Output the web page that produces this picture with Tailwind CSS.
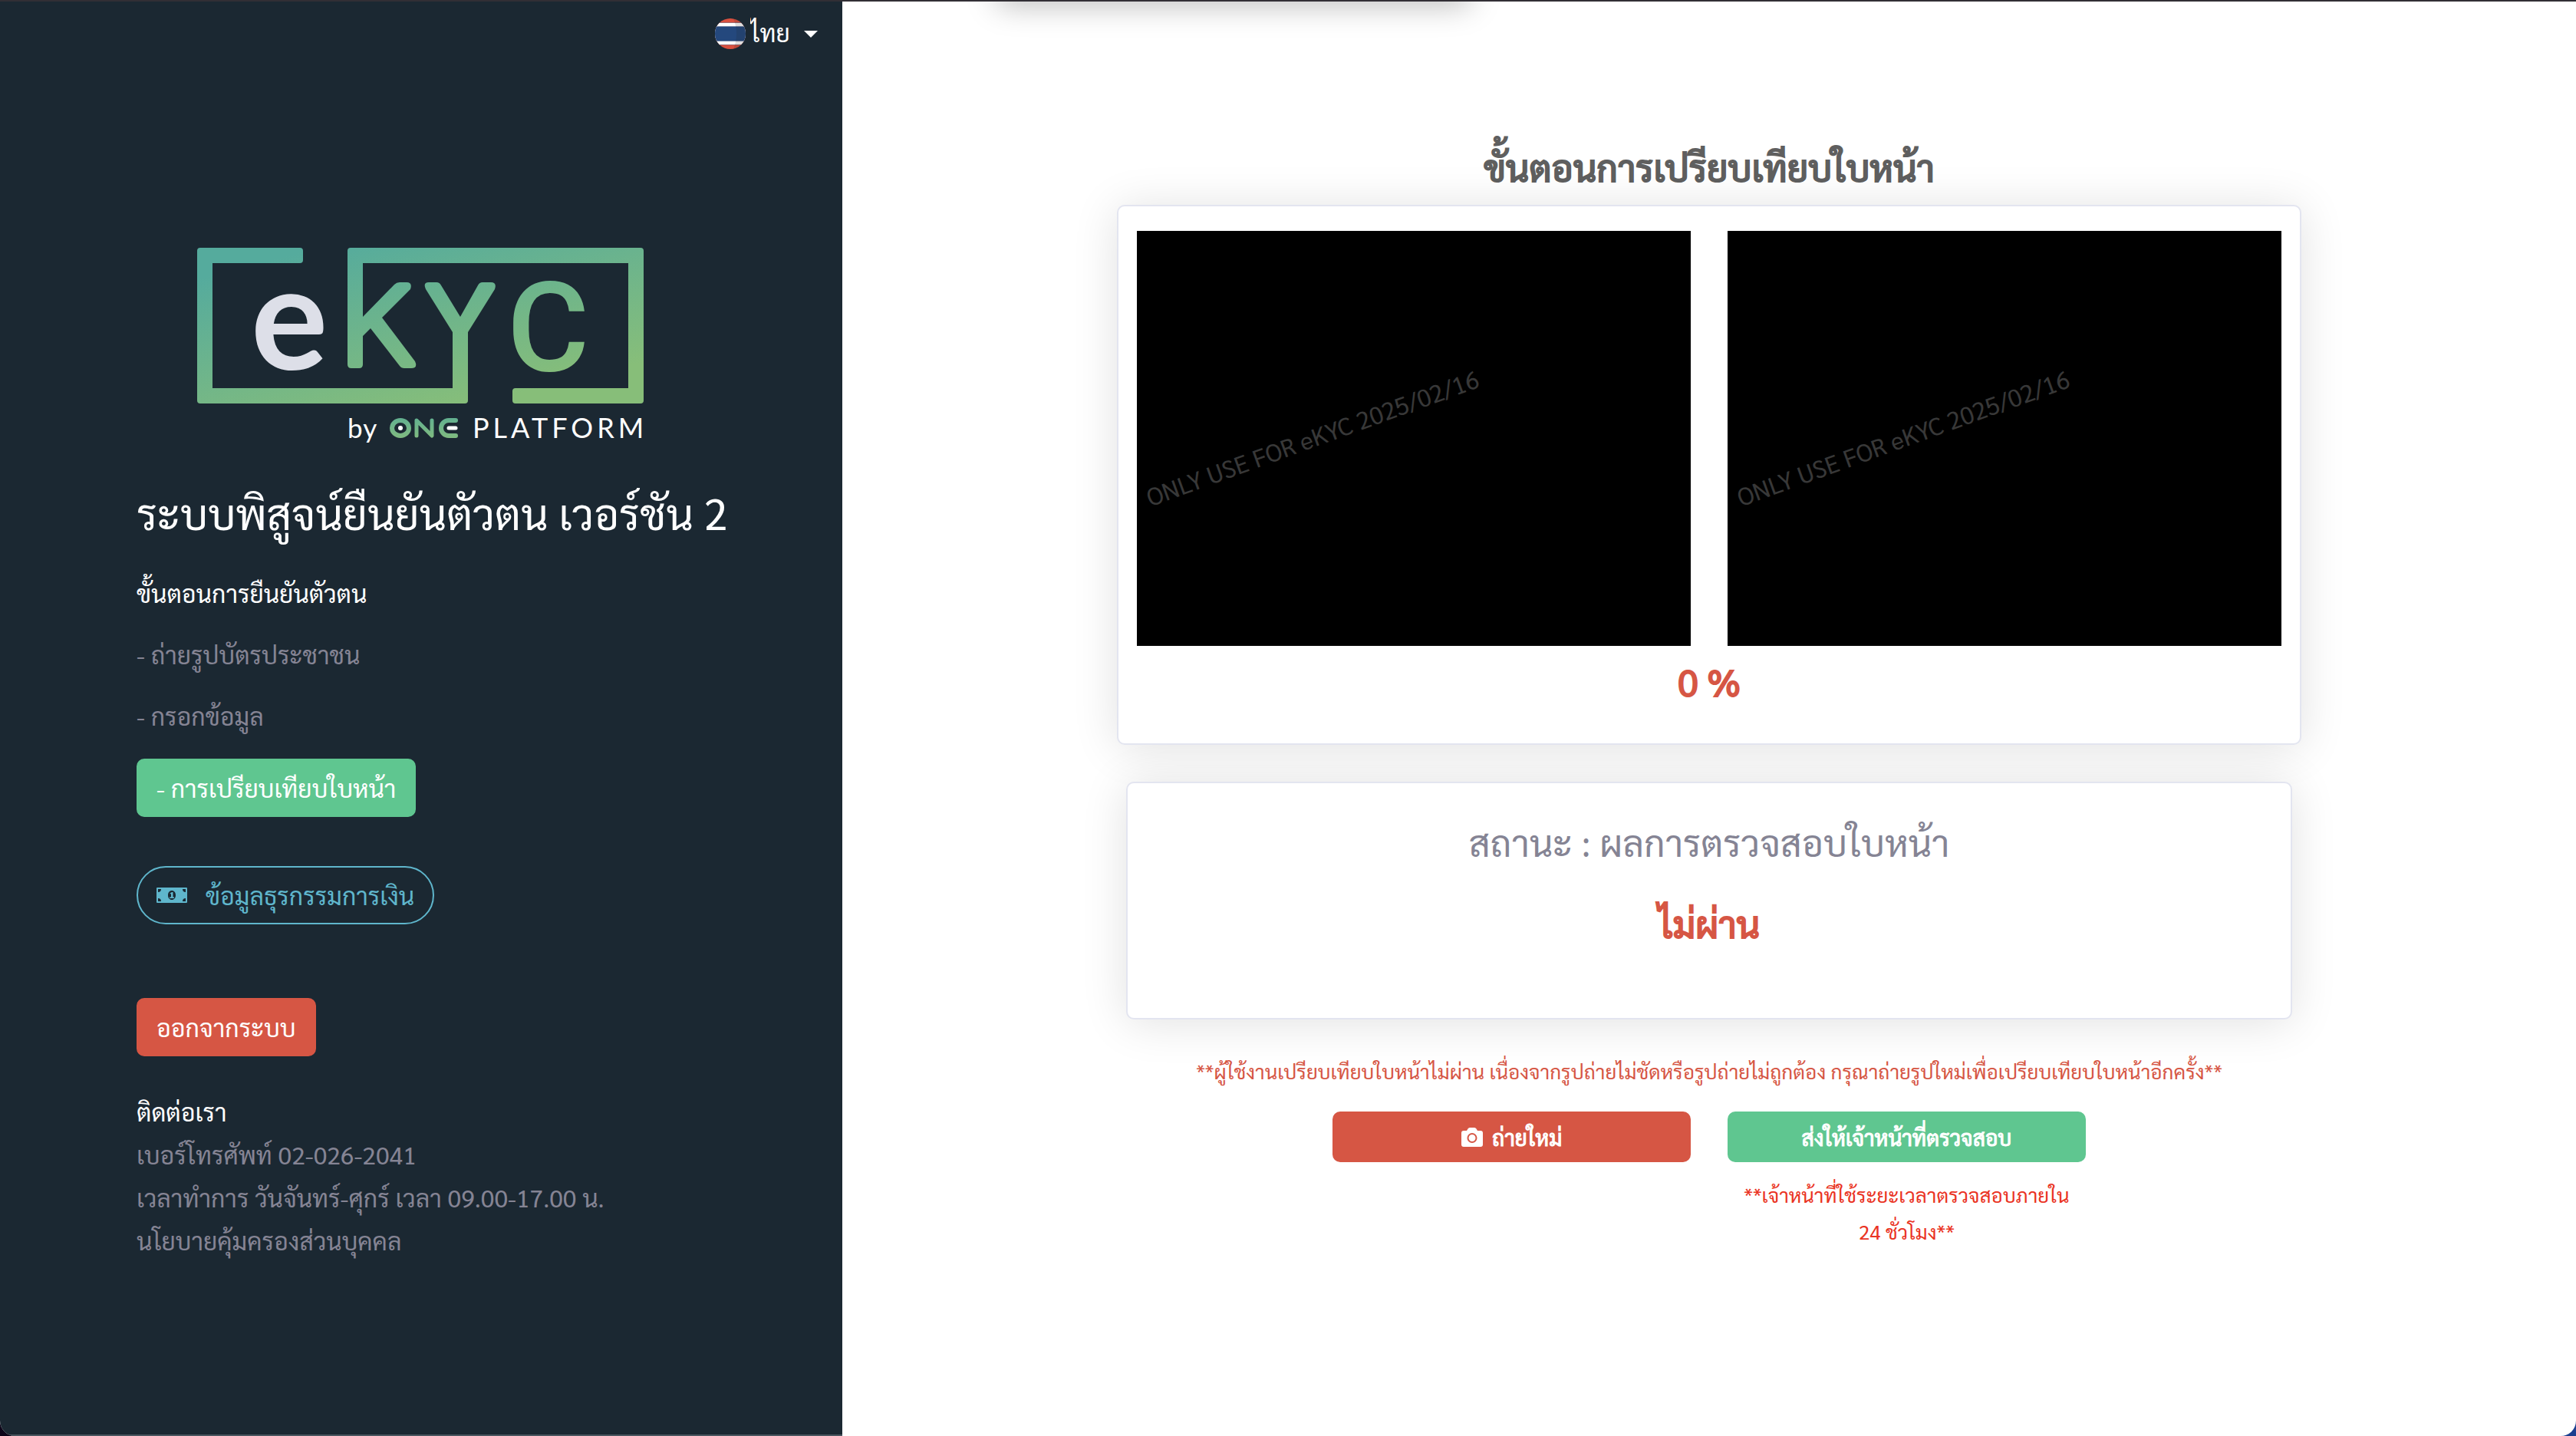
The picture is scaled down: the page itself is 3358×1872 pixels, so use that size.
<!DOCTYPE html>
<html lang="th">
<head>
<meta charset="utf-8">
<meta name="viewport" content="width=device-width, initial-scale=1">
<title>eKYC by ONE PLATFORM</title>
<script src="https://cdn.jsdelivr.net/npm/@tailwindcss/browser@4"></script>
</head>
<body class="bg-linear-to-r from-[#0d0519] to-[#1c3f8f] font-['Sarabun','Noto_Sans_Thai','Noto_Sans',sans-serif] text-[32px] leading-[48px]">
<div class="flex min-h-screen overflow-hidden rounded-b-[20px] border-t-2 border-[#322f35] bg-white">

  <aside class="flex w-[32.7%] shrink-0 flex-col border-b-2 border-[#4a565f] bg-[#1b2832] px-[178px] pb-20 text-white">
    <label class="-mr-[146px] flex h-[84px] items-center self-end">
      <svg class="size-10" viewBox="0 0 40 40" aria-hidden="true">
        <clipPath id="round"><circle cx="20" cy="20" r="20"/></clipPath>
        <g clip-path="url(#round)">
          <rect width="40" height="40" fill="#d9503f"/>
          <rect y="5" width="40" height="30" fill="#9d6a70"/>
          <rect y="6" width="40" height="28" fill="#fff"/>
          <rect y="10" width="40" height="20" fill="#7688a8"/>
          <rect y="11" width="40" height="18" fill="#24487d"/>
          <path d="M24 0q8 20 0 40h16V0z" fill="#222" opacity=".15"/>
        </g>
      </svg>
      <select aria-label="ภาษา" class="ml-1.5 w-[70px] appearance-none bg-transparent pb-1 text-white"><option>ไทย</option><option>English</option></select>
      <svg class="h-[9px] w-[18px]" viewBox="0 0 18 9" aria-hidden="true"><path d="M0 0h18L9 9z" fill="#fff"/></svg>
    </label>

    <svg class="ml-[79px] mt-[237px] h-[270px] w-[582px] overflow-visible" viewBox="0 0 582 270" role="img" aria-label="eKYC by ONE PLATFORM">
      <defs>
        <linearGradient id="brand" gradientUnits="userSpaceOnUse" x1="240" y1="-20" x2="300" y2="220">
          <stop offset="0" stop-color="#55ab9d"/><stop offset="1" stop-color="#87be79"/>
        </linearGradient>
        <linearGradient id="one" gradientUnits="userSpaceOnUse" x1="0" y1="222" x2="0" y2="248">
          <stop offset="0" stop-color="#62b090"/><stop offset="1" stop-color="#80bb80"/>
        </linearGradient>
      </defs>
      <g fill="url(#brand)">
        <path d="M4 0H134q4 0 4 4V16q0 4-4 4H20V183H333V110L298 54Q294 45 302 45H312Q316 45 318 49L343 90L366 49Q368 45 372 45H383Q391 45 388 54L353 110V199q0 4-4 4H4q-4 0-4-4V4q0-4 4-4z"/>
        <path d="M200 0H578q4 0 4 4V199q0 4-4 4H415q-4 0-4-4V187q0-4 4-4H562V20H216V90L257 48Q260 45 264 45H273Q281 45 278 54L241 91L284 148Q288 157 279 157H270Q266 157 264 154L226 105L216 115V152q0 5-5 5H201q-5 0-5-5V4q0-4 4-4z"/>
        <text x="404" y="160" font-family="Roboto, sans-serif" font-weight="500" font-size="164">C</text>
      </g>
      <text x="70" y="159" fill="#dddfe8" font-family="Lato, sans-serif" font-weight="700" font-size="188">e</text>
      <text x="196" y="248" fill="#fff" font-family="Lato, sans-serif" font-size="35" letter-spacing="1">by</text>
      <g fill="none" stroke="url(#one)" stroke-width="6" stroke-linecap="round" stroke-linejoin="round">
        <ellipse cx="265" cy="235" rx="11" ry="10"/>
        <path stroke-width="5" d="M286 245V225L306 245V225"/>
        <path d="M337 225H328a10 10 0 0 0 0 20h9"/>
      </g>
      <circle cx="265" cy="235" r="3" fill="#fff"/>
      <path d="M328 235h9" stroke="#fff" stroke-width="5" stroke-linecap="round"/>
      <text x="359" y="248" fill="#fff" font-family="Lato, sans-serif" font-size="36" letter-spacing="5">PLATFORM</text>
    </svg>

    <h1 class="mt-[41px] whitespace-nowrap text-[56px] leading-[68px]">ระบบพิสูจน์ยืนยันตัวตน เวอร์ชัน 2</h1>
    <h2 class="mt-[47px]">ขั้นตอนการยืนยันตัวตน</h2>
    <p class="mt-8 text-[#858494]">- ถ่ายรูปบัตรประชาชน</p>
    <p class="mt-8 text-[#858494]">- กรอกข้อมูล</p>
    <button class="mt-8 self-start rounded-[10px] border-2 border-[#5fc690] bg-[#5fc690] px-6 py-3">- การเปรียบเทียบใบหน้า</button>
    <button class="mt-16 flex items-center self-start rounded-full border-2 border-[#5fb6cc] px-6 py-3 text-[#5fb6cc]">
      <svg class="mr-6 h-5 w-10" viewBox="0 0 40 20" aria-hidden="true">
        <path fill="currentColor" fill-rule="evenodd" d="M1 0H39q1 0 1 1V19q0 1-1 1H1q-1 0-1-1V1q0-1 1-1zM2 2V6A4 4 0 0 0 6 2zM34 2a4 4 0 0 0 4 4V2zM2 14v4H6a4 4 0 0 0-4-4zM38 14a4 4 0 0 0-4 4h4zM20 4c-3 0-5 2.500-5 6s2 6 5 6 5-2.500 5-6-2-6-5-6z"/>
        <path fill="currentColor" d="M17.500 7.500L20 6h1.500v6.500H23V14h-6v-1.500h2V8l-1 .5z"/>
      </svg>
      ข้อมูลธุรกรรมการเงิน
    </button>
    <button class="mt-24 self-start rounded-[10px] border-2 border-[#d65644] bg-[#d65644] px-6 py-3">ออกจากระบบ</button>
    <section class="mt-11 whitespace-nowrap leading-[56px] text-[#858494]">
      <h2 class="text-white">ติดต่อเรา</h2>
      <p>เบอร์โทรศัพท์ 02-026-2041</p>
      <p>เวลาทำการ วันจันทร์-ศุกร์ เวลา 09.00-17.00 น.</p>
      <a href="#privacy">นโยบายคุ้มครองส่วนบุคคล</a>
    </section>
  </aside>

  <main class="relative flex min-w-0 flex-1 flex-col items-center overflow-hidden pt-[186px]">
    <div class="absolute -top-10 left-[202px] h-10 w-[616px] shadow-[0_4px_40px_rgba(0,0,0,0.28)]"></div>
    <h2 class="text-[48px] leading-[58px] text-[#5f5f5f] [-webkit-text-stroke:2px_currentColor]">ขั้นตอนการเปรียบเทียบใบหน้า</h2>

    <div class="mt-[21px] w-[68.3%] text-center">
      <section class="rounded-[10px] border-2 border-[#e3e5f0] bg-white px-6 pb-[45px] pt-8 shadow-[0_4px_60px_rgba(0,0,0,0.12)]">
        <div class="grid grid-cols-2 gap-12">
          <figure class="relative aspect-4/3 overflow-hidden bg-black">
            <figcaption class="absolute inset-y-0 left-0 flex -rotate-20 items-center whitespace-nowrap pb-1 text-[#383838]">ONLY USE FOR eKYC 2025/02/16</figcaption>
          </figure>
          <figure class="relative aspect-4/3 overflow-hidden bg-black">
            <figcaption class="absolute inset-y-0 left-0 flex -rotate-20 items-center whitespace-nowrap pb-1 text-[#383838]">ONLY USE FOR eKYC 2025/02/16</figcaption>
          </figure>
        </div>
        <p class="mt-[10px] text-[48px] leading-[72px] text-[#d65644] [-webkit-text-stroke:2px_currentColor]">0 %</p>
      </section>

      <section class="mx-3 mt-12 rounded-[10px] border-2 border-[#e3e5f0] bg-white pb-[88px] pt-10 text-[48px] leading-[72px] shadow-[0_4px_60px_rgba(0,0,0,0.12)]">
        <p class="text-[#858494]">สถานะ : ผลการตรวจสอบใบหน้า</p>
        <p class="mt-[34px] text-[#d65644] [-webkit-text-stroke:2px_currentColor]">ไม่ผ่าน</p>
      </section>

      <p class="mt-[43px] whitespace-nowrap text-[26px] text-[#d65644]">**ผู้ใช้งานเปรียบเทียบใบหน้าไม่ผ่าน เนื่องจากรูปถ่ายไม่ชัดหรือรูปถ่ายไม่ถูกต้อง กรุณาถ่ายรูปใหม่เพื่อเปรียบเทียบใบหน้าอีกครั้ง**</p>

      <div class="mx-auto mt-[29px] grid w-[63.6%] grid-cols-2 items-start gap-12">
        <button class="flex h-[66px] items-center justify-center rounded-[10px] bg-[#d65644] text-[28px] text-white [-webkit-text-stroke:1px_currentColor]">
          <svg class="mr-3 h-[25px] w-7" viewBox="0 0 28 25" aria-hidden="true">
            <path fill="currentColor" fill-rule="evenodd" d="M3 4H7L8.500 1.500Q9.300 0 11 0h6q1.700 0 2.500 1.500L21 4h4q3 0 3 3V22q0 3-3 3H3q-3 0-3-3V7q0-3 3-3zM14 7a6.500 6.500 0 1 0 0 13a6.500 6.500 0 0 0 0-13zM14 9a4.500 4.500 0 1 1 0 9a4.500 4.500 0 0 1 0-9z"/>
          </svg>
          ถ่ายใหม่
        </button>
        <div>
          <button class="h-[66px] w-full rounded-[10px] bg-[#5fc690] text-[28px] text-white [-webkit-text-stroke:1px_currentColor]">ส่งให้เจ้าหน้าที่ตรวจสอบ</button>
          <p class="mt-[18px] text-[26px] text-[#ea3323]">**เจ้าหน้าที่ใช้ระยะเวลาตรวจสอบภายใน<br>24 ชั่วโมง**</p>
        </div>
      </div>
    </div>
  </main>
</div>
</body>
</html>
